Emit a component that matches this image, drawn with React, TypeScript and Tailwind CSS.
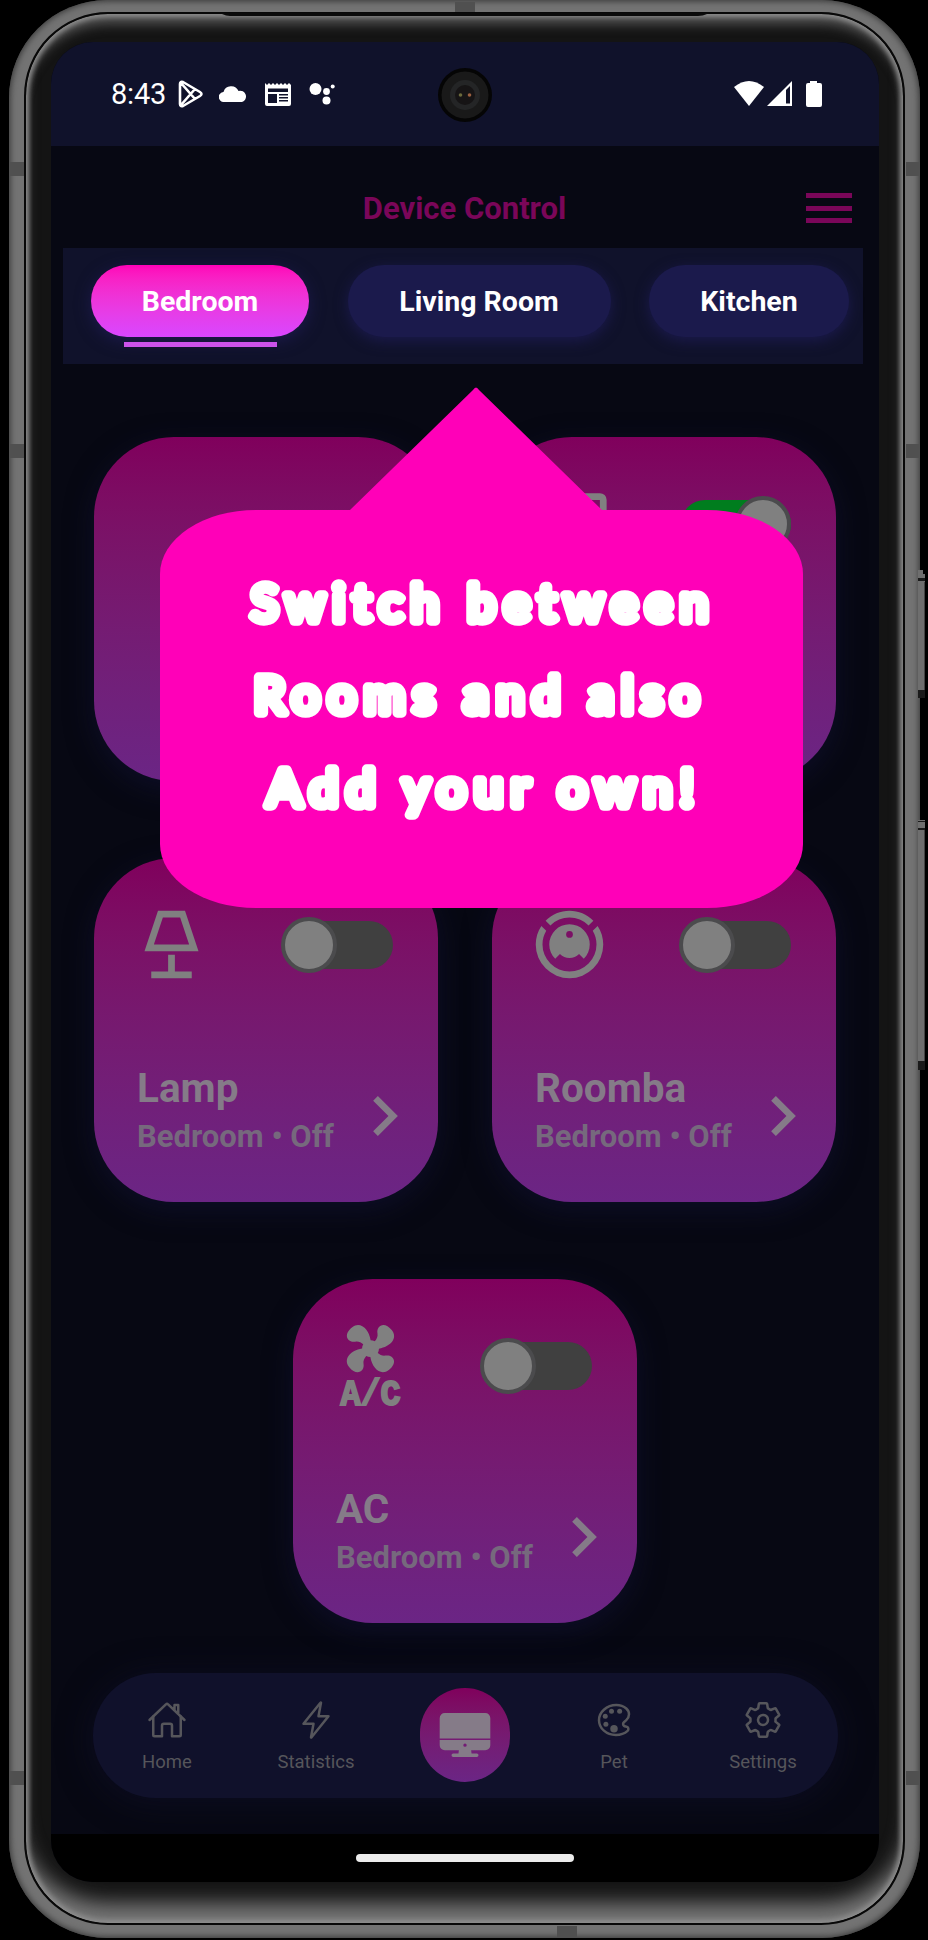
import React from "react";
import { IoHomeOutline, IoFlashOutline, IoColorPaletteOutline, IoSettingsOutline, IoDesktop } from "react-icons/io5";
import type { IconType } from "react-icons";

function TvIcon() {
  return (
    <svg viewBox="0 0 24 24" className="size-[81px]" fill="currentColor">
      <path d="M21 17H3V5h18m0-2H3a2 2 0 0 0-2 2v12a2 2 0 0 0 2 2h5v2h8v-2h5a2 2 0 0 0 2-2V5a2 2 0 0 0-2-2Z" />
    </svg>
  );
}
function LampIcon() {
  return (
    <svg viewBox="0 0 24 24" className="size-[81px]" fill="currentColor">
      <path d="M8 2h8l4 12H4L8 2M11 15h2v5h5v2H6v-2h5v-5M9.44 4l-2.67 8h10.46l-2.67-8H9.44Z" fillRule="evenodd" />
    </svg>
  );
}
function RoombaIcon() {
  return (
    <svg viewBox="0 0 24 24" className="size-[81px]" fill="currentColor">
      <path d="M12,2C14.65,2 17.19,3.06 19.07,4.93L17.65,6.35C16.15,4.85 14.12,4 12,4C9.88,4 7.84,4.84 6.35,6.35L4.93,4.93C6.81,3.06 9.35,2 12,2M3.66,6.5L5.11,7.94C4.39,9.17 4,10.57 4,12A8,8 0 0,0 12,20A8,8 0 0,0 20,12C20,10.57 19.61,9.17 18.88,7.94L20.34,6.5C21.42,8.12 22,10.04 22,12A10,10 0 0,1 12,22A10,10 0 0,1 2,12C2,10.04 2.58,8.12 3.66,6.5M12,6A6,6 0 0,1 18,12C18,13.59 17.37,15.12 16.24,16.24L14.83,14.83C14.08,15.58 13.06,16 12,16C10.94,16 9.92,15.58 9.17,14.83L7.76,16.24C6.63,15.12 6,13.59 6,12A6,6 0 0,1 12,6M12,8A1,1 0 0,0 11,9A1,1 0 0,0 12,10A1,1 0 0,0 13,9A1,1 0 0,0 12,8Z" />
    </svg>
  );
}
function AcIcon() {
  return (
    <svg viewBox="0 0 24 24" className="size-[81px] overflow-visible" fill="currentColor">
      <path d="M6.59,0.66C8.93,-1.15 11.47,1.06 12.04,4.5C12.47,4.5 12.89,4.62 13.27,4.84C13.79,4.24 14.25,3.42 14.07,2.5C13.65,0.35 16.06,-1.39 18.35,1.58C20.16,3.92 17.95,6.46 14.5,7.03C14.5,7.46 14.39,7.89 14.16,8.27C14.76,8.78 15.58,9.24 16.5,9.06C18.63,8.64 20.38,11.04 17.41,13.34C15.07,15.15 12.53,12.94 11.96,9.5C11.53,9.5 11.11,9.37 10.74,9.15C10.22,9.75 9.75,10.58 9.93,11.5C10.35,13.64 7.94,15.39 5.65,12.42C3.83,10.07 6.05,7.53 9.5,6.97C9.5,6.54 9.63,6.12 9.85,5.74C9.25,5.23 8.43,4.76 7.5,4.94C5.37,5.36 3.62,2.96 6.59,0.66Z" />
      <text x="3.1" y="23.700" fontSize="11.2" textLength="17.8" lengthAdjust="spacingAndGlyphs" className="font-['Liberation_Mono',monospace] font-bold" stroke="currentColor" strokeWidth=".6">A/C</text>
    </svg>
  );
}

function Toggle({ on = false }: { on?: boolean }) {
  return (
    <span className={`flex h-12 w-[110px] items-center rounded-full ${on ? "justify-end bg-[#007d1e]" : "bg-[#404040]"}`}>
      <span className={`size-14 shrink-0 rounded-full border-4 border-[#4b4b4d] bg-[#808080] ${on ? "" : "-ml-0.5"}`} />
    </span>
  );
}

function DeviceCard({ name, on, icon }: { name?: string; on?: boolean; icon?: React.ReactNode }) {
  return (
    <div className="flex h-[344px] w-[344px] flex-col rounded-[80px] bg-gradient-to-b from-[#80005c] to-[#6b2585] pt-[46px] pr-[45px] pl-[37px] text-[#808080] shadow-[0_8px_28px_#14143c80]">
      {icon && (
        <div className="flex items-center justify-between">
          {icon}
          <Toggle on={on} />
        </div>
      )}
      {name && (
        <div className="mt-[77px] flex items-start justify-between pl-[6px]">
          <div className="pt-px font-bold whitespace-nowrap">
            <div className="text-[40.500px] leading-[50px] text-[#857b88]">{name}</div>
            <div className="text-[31px] leading-[47px] text-[#76697d]">Bedroom • Off</div>
          </div>
          <svg viewBox="8.59 6 7.41 12" className="mt-[34px] -mr-[5px] h-[40px] w-[25px] shrink-0 text-[#857b88]" fill="currentColor">
            <path d="M8.59,16.58L13.17,12L8.59,7.41L10,6L16,12L10,18L8.59,16.58Z" />
          </svg>
        </div>
      )}
    </div>
  );
}

function NavItem({ icon: Icon, label }: { icon: IconType; label: string }) {
  return (
    <div className="flex w-[149px] flex-col items-center pt-[27px] text-[#56565b]">
      <Icon className="size-[40px]" />
      <span className="mt-[10px] text-[18.5px] leading-6">{label}</span>
    </div>
  );
}

export default function App() {
  return (
    <div className="relative h-[1940px] w-[928px] overflow-hidden bg-black font-['Roboto',sans-serif]">
      <SideKeys />
      <div className="ml-[9px] flex h-[1938px] w-[911px] rounded-[98px] bg-[#737373] px-[15px] pt-3 pb-[13px] shadow-[inset_0_0_6px_1px_#343434]">
        <div className="flex w-full rounded-[84px] border-2 border-[#080808] bg-[#141414] pt-7 pr-6 pb-[41px] pl-[25px] shadow-[inset_0_0_5px_3px_#8e8e8e,inset_0_16px_12px_-6px_#555,inset_0_-28px_20px_-8px_#777]">
          <div className="flex h-[1840px] w-[828px] flex-col overflow-hidden rounded-[42px] bg-[#070813]">
            <StatusBar />
            <header className="grid h-[102px] grid-cols-[1fr_auto_1fr] items-center pt-[23px] pr-[27px] pl-[26px] text-[#7a0659]">
              <span />
              <h1 className="pt-0.5 text-[31px] font-bold">Device Control</h1>
              <div className="-mt-px flex flex-col gap-[7.5px] justify-self-end">
                <span className="h-[5px] w-[46px] bg-current" />
                <span className="h-[5px] w-[46px] bg-current" />
                <span className="h-[5px] w-[46px] bg-current" />
              </div>
            </header>
            <nav className="ml-3 flex h-[116px] w-[800px] gap-[38.5px] bg-[#10122b] pt-[17px] pl-7 text-[28.500px] font-bold text-white">
              <div className="flex flex-col items-center">
                <div className="flex h-[72px] w-[218px] items-center justify-center rounded-full bg-gradient-to-b from-[#ff00b8] to-[#d946ff] pt-0.5 shadow-[0_4px_16px_#1c1a4c]">Bedroom</div>
                <div className="mt-[5px] h-[5px] w-[153px] bg-[#cc52ea]" />
              </div>
              <div className="flex h-[72px] w-[263px] items-center justify-center rounded-full bg-[#1b1a4c] pt-0.5 shadow-[0_4px_14px_#1b1a4c]">Living Room</div>
              <div className="flex h-[72px] w-[200px] items-center justify-center rounded-full bg-[#1b1a4c] pt-0.5 shadow-[0_4px_14px_#1b1a4c]">Kitchen</div>
            </nav>
            <main className="mx-auto mt-[73px] flex w-[742px] flex-wrap justify-center gap-x-[54px] gap-y-[77px]">
              <DeviceCard />
              <DeviceCard on icon={<TvIcon />} />
              <DeviceCard name="Lamp" icon={<LampIcon />} />
              <DeviceCard name="Roomba" icon={<RoombaIcon />} />
              <DeviceCard name="AC" icon={<AcIcon />} />
            </main>
            <div className="mt-[50px] ml-[41.5px] flex h-[125px] w-[745px] shrink-0 rounded-full bg-[#10112b] shadow-[0_4px_34px_#10112b99]">
              <NavItem icon={IoHomeOutline} label="Home" />
              <NavItem icon={IoFlashOutline} label="Statistics" />
              <div className="flex w-[149px] justify-center pt-[15px]">
                <div className="flex h-[94px] w-[90px] items-center justify-center rounded-[45px] bg-gradient-to-b from-[#80005c] to-[#6b2585] text-[#857b88]">
                  <IoDesktop className="size-[54px]" />
                </div>
              </div>
              <NavItem icon={IoColorPaletteOutline} label="Pet" />
              <NavItem icon={IoSettingsOutline} label="Settings" />
            </div>
            <div className="mt-auto flex h-[48px] shrink-0 items-center justify-center bg-black">
              <div className="h-2 w-[218px] rounded-full bg-[#ececec]" />
            </div>
          </div>
        </div>
      </div>
      <AntennaBands />
      <Tip />
    </div>
  );
}

function StatusBar() {
  return (
    <div className="flex h-[104px] shrink-0 items-center bg-[#10122b] pr-[57px] pl-[60px] text-white">
      <span className="pt-0.5 text-[29px] tracking-[-0.2px]">8:43</span>
      <svg viewBox="0 0 26 28" className="ml-[12px] h-7 w-[26px]" fill="none" stroke="currentColor" strokeWidth="2.6" strokeLinejoin="round">
        <path d="M2 4v20q0 3 3 2L22 16q3-2 0-4L5 2Q2 1 2 4ZM3 3l14 16M3 25 17 9" />
      </svg>
      <svg viewBox="0 0 28 16" className="ml-[15px] h-4 w-7" fill="currentColor">
        <path d="M5 16A5 5 0 0 1 4.500 6A8 8 0 0 1 19.500 5 5.500 5.500 0 0 1 23 16Z" />
      </svg>
      <svg viewBox="0 0 26 24" className="ml-[18px] h-6 w-[26px]" fill="currentColor">
        <path fillRule="evenodd" d="M0 1l2 2 2-2 2 2 2-2 2 2 2-2 2 2 2-2 2 2 2-2 2 2 2-2 2 2V22q0 2-2 2H2q-2 0-2-2ZM3 6.500V10h20V6.500ZM3 12v9h9v-9ZM14 12v1.500h9V12ZM14 15v1.500h9V15ZM14 18v1.500h9V18Z" />
      </svg>
      <svg viewBox="0 0 26 24" className="ml-[18px] h-6 w-[26px]" fill="currentColor">
        <circle cx="6.500" cy="7" r="6" />
        <circle cx="17.500" cy="9.500" r="3.400" />
        <circle cx="23.700" cy="4.500" r="2" />
        <circle cx="17.500" cy="18.500" r="4" />
      </svg>
      <svg viewBox="0 0 54 54" className="mt-0.5 ml-[103px] size-[54px]">
        <circle cx="27" cy="27" r="27" fill="#050505" />
        <circle cx="27" cy="27" r="23.500" fill="#191919" />
        <circle cx="27" cy="27" r="15" fill="#242526" />
        <circle cx="27" cy="27" r="10" fill="#161415" />
        <circle cx="22.500" cy="27" r="1.800" fill="#6b6a3c" />
        <circle cx="31.500" cy="27" r="1.800" fill="#9b6040" />
      </svg>
      <svg viewBox="0 0 88 26" className="ml-auto h-[26px] w-[88px]" fill="currentColor">
        <path d="M0 6Q15-6 30 6L15 25Z" />
        <path fillRule="evenodd" d="M33 25 58 0v25ZM52 9v13.500h4V5Z" />
        <path d="M76 0h7v2h3q2 0 2 2v20q0 2-2 2H74q-2 0-2-2V4q0-2 2-2h2Z" />
      </svg>
    </div>
  );
}

function SideKeys() {
  return (
    <svg viewBox="0 0 9 500" className="absolute top-[570px] left-[918px] h-[500px] w-[9px]">
      <path d="M0 0h5v4h2v124H0ZM0 250h7v250H0Z" fill="#6e6e6e" />
      <path d="M0 8h7v3H0ZM0 251h7v1H0ZM0 258h7v2H0ZM0 491h7v9H0ZM0 120h7v8H0Z" fill="#1a1a1a" />
      <path d="M6.500 12v108M6.500 260v231" stroke="#444" />
    </svg>
  );
}

function AntennaBands() {
  return (
    <svg viewBox="0 0 928 1940" className="pointer-events-none absolute inset-0 h-[1940px] w-[928px]">
      <path
        fill="#505050"
        d="M10 162h14v14H10zM906 162h13v14h-13zM10 444h14v14H10zM906 444h13v14h-13zM10 1771h14v14H10zM906 1771h13v14h-13zM455 2h20v10h-20zM557 1926h20v11h-20z"
      />
      <path fill="#0a0a0a" d="M222 14q4 2 8 2h468q5 0 9-2v-1H222Z" />
    </svg>
  );
}

function Tip() {
  return (
    <div className="absolute top-[387px] left-[160px] flex w-[643px] flex-col">
      <svg viewBox="0 0 252 123" className="ml-[190px] h-[123px] w-[252px]" fill="#ff00b8">
        <path d="M0 123 123 3q3-5 6 0L252 123Z" />
      </svg>
      <div className="flex h-[398px] w-full justify-center rounded-[96px/64px] bg-[#ff00b8]">
        <svg
          viewBox="0 0 643 398"
          className="h-[398px] w-[643px] font-['Lato',sans-serif] text-[50px] font-normal"
          fill="#fff"
          stroke="#fff"
          strokeWidth="9.500"
          strokeLinejoin="round"
          strokeLinecap="round"
          letterSpacing="8"
        >
          <text x="91" y="111" textLength="465" lengthAdjust="spacingAndGlyphs">Switch between</text>
          <text x="94" y="203" textLength="453" lengthAdjust="spacingAndGlyphs">Rooms and also</text>
          <text x="107" y="296" textLength="435" lengthAdjust="spacingAndGlyphs">Add your own!</text>
        </svg>
      </div>
    </div>
  );
}
